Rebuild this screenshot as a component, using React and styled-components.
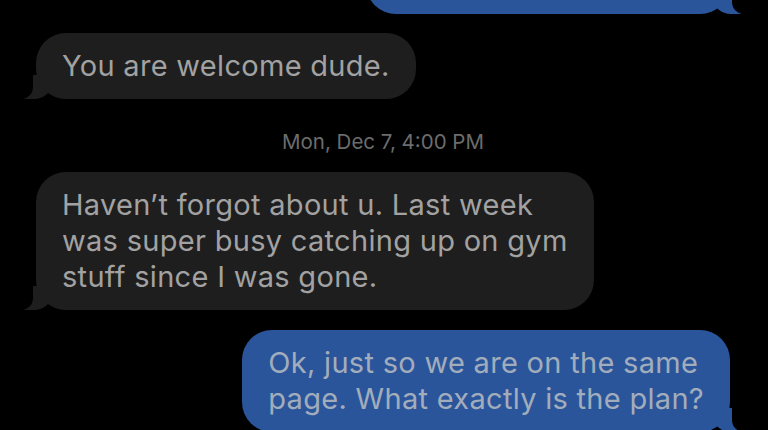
import React from 'react';
import styled, { createGlobalStyle } from 'styled-components';

const GlobalStyle = createGlobalStyle`
  html, body {
    margin: 0;
    padding: 0;
    background: #000;
  }
  body {
    width: 768px;
    height: 430px;
    overflow: hidden;
    font-family: Inter, "Liberation Sans", Arial, sans-serif;
  }
`

const Thread = styled.div`
  display: flex;
  flex-direction: column;
  padding: 0 38px 0 36px;
  margin-top: -46px;
`

const Row = styled.div`
  display: flex;
  justify-content: ${p => (p.mine ? 'flex-end' : 'flex-start')};
  margin-top: ${p => p.gap || 0}px;
`

const Bubble = styled.div`
  position: relative;
  background: ${p => (p.mine ? '#2b559b' : '#1e1e1f')};
  color: ${p => (p.mine ? '#a2adbb' : '#a2a2a2')};
  font-size: 29px;
  letter-spacing: 0.3px;
  line-height: 36px;
  padding: 15px 26px 15px 26px;
  border-radius: 30px;
  white-space: nowrap;
  min-width: ${p => p.w || 0}px;
  min-height: ${p => p.h || 0}px;
  box-sizing: border-box;

  &::before {
    content: "";
    position: absolute;
    bottom: 0;
    ${p => (p.mine ? 'right: -11px;' : 'left: -12px;')}
    width: 28px;
    height: 24px;
    background: ${p => (p.mine ? '#2b559b' : '#1e1e1f')};
    ${p => (p.mine ? 'border-bottom-left-radius: 18px 16px;' : 'border-bottom-right-radius: 18px 16px;')}
  }

  &::after {
    content: "";
    position: absolute;
    bottom: 0;
    ${p => (p.mine ? 'right: -16px;' : 'left: -17px;')}
    width: 14px;
    height: 26px;
    background: #000;
    ${p => (p.mine ? 'border-bottom-left-radius: 12px;' : 'border-bottom-right-radius: 12px;')}
  }
`

const Stamp = styled.div`
  text-align: center;
  font-size: 20.5px;
  line-height: 26px;
  color: #6c6c6c;
  margin: 30px 0 17px 0;
`

function App() {
  return (
    <>
      <GlobalStyle />
      <Thread>
        <Row mine>
          <Bubble mine w={364} h={60} />
        </Row>
        <Row gap={19}>
          <Bubble>You are welcome dude.</Bubble>
        </Row>
        <Stamp>Mon, Dec 7, 4:00 PM</Stamp>
        <Row>
          <Bubble>
            Haven’t forgot about u. Last week<br />
            was super busy catching up on gym<br />
            stuff since I was gone.
          </Bubble>
        </Row>
        <Row mine gap={20}>
          <Bubble mine>
            Ok, just so we are on the same<br />
            page. What exactly is the plan?
          </Bubble>
        </Row>
      </Thread>
    </>
  )
}

export default App;
